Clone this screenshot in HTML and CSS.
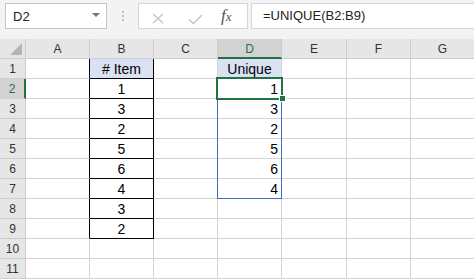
FILE: index.html
```html
<!DOCTYPE html>
<html>
<head>
<meta charset="utf-8">
<link rel="stylesheet" href="styles.css">
</head>
<body>
<div class="app">
  <div class="toolbar">
    <div class="namebox">
      <span class="nb-text">D2</span>
      <svg class="caret" width="8" height="4" viewBox="0 0 8 4"><path d="M0 0H8L4 4Z" fill="#777"/></svg>
    </div>
    <svg class="dots" width="3" height="11" viewBox="0 0 3 11"><rect x="0" y="0" width="2" height="2" fill="#bdbdbd"/><rect x="0" y="4" width="2" height="2" fill="#bdbdbd"/><rect x="0" y="8" width="2" height="2" fill="#bdbdbd"/></svg>
    <div class="fbtns">
      <svg class="ic-x" width="12" height="11" viewBox="0 0 12 11"><path d="M1 1L11 10M11 1L1 10" stroke="#c4c4c4" stroke-width="1.4" fill="none"/></svg>
      <svg class="ic-ok" width="15" height="11" viewBox="0 0 15 11"><path d="M1 5.5L5.5 9.5L14 1" stroke="#c4c4c4" stroke-width="1.5" fill="none"/></svg>
      <span class="fx">f<span class="fx-x">x</span></span>
    </div>
    <div class="finput">=UNIQUE(B2:B9)</div>
  </div>
  <div class="sheet">
    <div class="corner"><span class="tri"></span></div>
    <div class="ch">A</div><div class="ch">B</div><div class="ch">C</div><div class="ch sel">D</div><div class="ch">E</div><div class="ch">F</div><div class="ch">G</div>

    <div class="rh">1</div><div class="c al"></div><div class="c b hd ctr">#&nbsp;Item</div><div class="c"></div><div class="c hd ctr">Unique</div><div class="c"></div><div class="c"></div><div class="c"></div>
    <div class="rh sel">2</div><div class="c al"></div><div class="c b ctr">1</div><div class="c"></div><div class="c num">1</div><div class="c"></div><div class="c"></div><div class="c"></div>
    <div class="rh">3</div><div class="c al"></div><div class="c b ctr">3</div><div class="c"></div><div class="c num">3</div><div class="c"></div><div class="c"></div><div class="c"></div>
    <div class="rh">4</div><div class="c al"></div><div class="c b ctr">2</div><div class="c"></div><div class="c num">2</div><div class="c"></div><div class="c"></div><div class="c"></div>
    <div class="rh">5</div><div class="c al"></div><div class="c b ctr">5</div><div class="c"></div><div class="c num">5</div><div class="c"></div><div class="c"></div><div class="c"></div>
    <div class="rh">6</div><div class="c al"></div><div class="c b ctr">6</div><div class="c"></div><div class="c num">6</div><div class="c"></div><div class="c"></div><div class="c"></div>
    <div class="rh">7</div><div class="c al"></div><div class="c b ctr">4</div><div class="c"></div><div class="c num">4</div><div class="c"></div><div class="c"></div><div class="c"></div>
    <div class="rh">8</div><div class="c al"></div><div class="c b ctr">3</div><div class="c"></div><div class="c"></div><div class="c"></div><div class="c"></div><div class="c"></div>
    <div class="rh">9</div><div class="c al"></div><div class="c b ctr">2</div><div class="c"></div><div class="c"></div><div class="c"></div><div class="c"></div><div class="c"></div>
    <div class="rh">10</div><div class="c"></div><div class="c"></div><div class="c"></div><div class="c"></div><div class="c"></div><div class="c"></div><div class="c"></div>
    <div class="rh">11</div><div class="c"></div><div class="c"></div><div class="c"></div><div class="c"></div><div class="c"></div><div class="c"></div><div class="c"></div>

    <div class="spill"></div>
    <div class="selbox"></div>
    <div class="handle"></div>
  </div>
</div>
</body>
</html>
```

FILE: styles.css
```css
* { box-sizing: border-box; }
html, body { margin: 0; padding: 0; }
body {
  width: 474px;
  height: 279px;
  overflow: hidden;
  background: #fff;
  font-family: "Liberation Sans", Arial, sans-serif;
  color: #000;
}
.app { width: 474px; height: 279px; overflow: hidden; }

.toolbar {
  height: 39px;
  background: #f3f3f3;
  display: flex;
  align-items: flex-start;
  padding: 3px 0 0 5px;
}
.namebox {
  width: 102px;
  height: 26px;
  background: #fff;
  border: 1px solid #c6c6c6;
  display: flex;
  align-items: center;
  padding-left: 7px;
  font-size: 13px;
  color: #222;
}
.nb-text { flex: 1; line-height: 24px; padding-top: 1px; }
.caret { margin-right: 6px; margin-top: -2px; }
.dots { margin: 8px 0 0 15px; }
.fbtns {
  margin-left: 13px;
  width: 110px;
  height: 26px;
  background: #fff;
  border: 1px solid #d6d6d6;
  display: flex;
  align-items: flex-start;
}
.ic-x { margin: 9px 0 0 13px; }
.ic-ok { margin: 10px 0 0 24px; }
.fx {
  margin: 3px 0 0 18px;
  font-family: "Liberation Serif", "Times New Roman", serif;
  font-style: italic;
  font-size: 17px;
  color: #555;
  line-height: 18px;
}
.fx-x { font-size: 13px; }
.finput {
  margin-left: 3px;
  flex: 1;
  height: 26px;
  background: #fff;
  border: 1px solid #d6d6d6;
  border-right: none;
  font-size: 13px;
  color: #222;
  padding: 4px 0 0 11px;
  line-height: 16px;
}

.sheet {
  position: relative;
  display: grid;
  grid-template-columns: 26px 64px 64px 64px 64px 65px 64px 64px;
  grid-auto-rows: 20px;
}
.corner, .ch, .rh {
  background: #e6e6e6;
  border-right: 1px solid #cdcdcd;
  border-bottom: 1px solid #cdcdcd;
  color: #333;
  font-size: 12px;
  text-align: center;
  padding-top: 3px;
  line-height: 14px;
}
.corner { position: relative; }
.tri {
  position: absolute;
  right: 3px;
  bottom: 3px;
  width: 0;
  height: 0;
  border-left: 12px solid transparent;
  border-bottom: 12px solid #b5b5b5;
}
.ch.sel {
  background: #d2d2d2;
  color: #217346;
  border-bottom: 2px solid #217346;
}
.rh.sel {
  background: #d2d2d2;
  color: #217346;
  border-right: 2px solid #217346;
}
.c {
  border-right: 1px solid #d4d4d4;
  border-bottom: 1px solid #d4d4d4;
  font-size: 14px;
  padding-top: 2px;
  line-height: 17px;
  white-space: nowrap;
  overflow: hidden;
}
.c.al { border-right-color: #000; }
.c.b { border-right-color: #000; border-bottom-color: #000; }
.hd { background: #d9e1f2; }
.ctr { text-align: center; }
.num { text-align: right; padding-right: 3px; }

.spill {
  position: absolute;
  left: 217px;
  top: 39px;
  width: 65px;
  height: 121px;
  border: 1px solid #3d6cc4;
}
.selbox {
  position: absolute;
  left: 216px;
  top: 38px;
  width: 67px;
  height: 23px;
  border: 2px solid #217346;
}
.handle {
  position: absolute;
  left: 279px;
  top: 56px;
  width: 7px;
  height: 7px;
  background: #217346;
  border: 1px solid #fff;
}
```
